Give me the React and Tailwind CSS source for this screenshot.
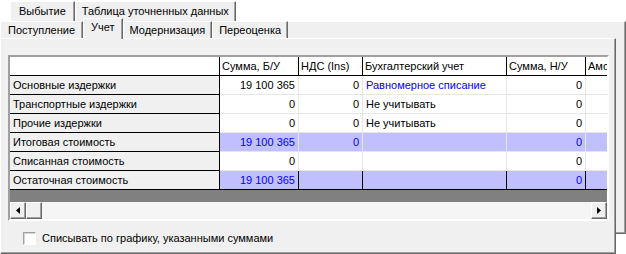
const rows = [
  { label: "Основные издержки", sum: "19 100 365", nds: "0", acc: "Равномерное списание", accBlue: true, nu: "0" },
  { label: "Транспортные издержки", sum: "0", nds: "0", acc: "Не учитывать", nu: "0" },
  { label: "Прочие издержки", sum: "0", nds: "0", acc: "Не учитывать", nu: "0" },
  { label: "Итоговая стоимость", sum: "19 100 365", nds: "0", acc: "", nu: "0", total: true },
  { label: "Списанная стоимость", sum: "0", nds: "", acc: "", nu: "0" },
  { label: "Остаточная стоимость", sum: "19 100 365", nds: "", acc: "", nu: "0", total: true },
];

function Tab({ children, className = "" }) {
  return (
    <div
      className={`flex items-center border-l border-t border-white border-r border-r-[#696969] bg-[#f0f0f0] shadow-[inset_-1px_0_0_#a0a0a0] ${className}`}
    >
      {children}
    </div>
  );
}

function Arrow({ dir }) {
  return (
    <svg width="4" height="7" viewBox="0 0 4 7">
      {dir === "left" ? <path d="M4 0 L0 3.5 L4 7 Z" fill="#000" /> : <path d="M0 0 L4 3.5 L0 7 Z" fill="#000" />}
    </svg>
  );
}

function ScrollButton({ children }) {
  return (
    <div className="flex h-[17px] w-[16px] items-center justify-center border-l border-t border-white border-r border-b border-r-[#696969] border-b-[#696969] bg-[#f0f0f0] shadow-[inset_-1px_-1px_0_#a0a0a0]">
      {children}
    </div>
  );
}

export default function App() {
  return (
    <div className="h-[254px] w-[626px] overflow-hidden bg-white font-['Liberation_Sans',Arial,sans-serif] text-[11px] leading-none text-black">
      {/* first tab row */}
      <div className="flex h-[21px] items-end pl-[10px]">
        <Tab className="h-[20px] px-[8px]">Выбытие</Tab>
        <Tab className="h-[20px] px-[6px]">Таблица уточненных данных</Tab>
      </div>

      {/* back page */}
      <div className="h-[213px] w-[626px] border-t border-white border-r border-b border-r-[#696969] border-b-[#696969] bg-[#f0f0f0] shadow-[inset_-1px_-1px_0_#a0a0a0]">
        {/* second tab row */}
        <div className="flex h-[16px] items-end">
          <Tab className="h-[17px] px-[7px]">Поступление</Tab>
          <Tab className="relative z-10 -mb-px h-[21px] px-[7px] pb-[3px]">Учет</Tab>
          <Tab className="h-[17px] px-[6px]">Модернизация</Tab>
          <Tab className="h-[17px] px-[6px]">Переоценка</Tab>
        </div>

        {/* front page */}
        <div className="h-[216px] w-[616px] border-l border-t border-white border-r border-b border-r-[#696969] border-b-[#696969] bg-[#f0f0f0] pl-[7px] pt-[16px] shadow-[inset_-1px_-1px_0_#a0a0a0]">
          <div className="w-[601px] border-2 border-t-[#a0a0a0] border-l-[#a0a0a0] border-r-white border-b-white">
            <div className="overflow-hidden shadow-[inset_1px_1px_0_#696969]">
              {/* header */}
              <div className="flex h-[19px] border-b border-black bg-white">
                <div className="w-[210px] shrink-0 border-r border-black" />
                <div className="flex w-[79px] shrink-0 items-center border-r border-black px-[2px]">Сумма, Б/У</div>
                <div className="flex w-[64px] shrink-0 items-center border-r border-black px-[2px]">НДС (Ins)</div>
                <div className="flex w-[144px] shrink-0 items-center border-r border-black px-[2px]">Бухгалтерский учет</div>
                <div className="flex w-[79px] shrink-0 items-center border-r border-black px-[2px]">Сумма, Н/У</div>
                <div className="flex w-[60px] shrink-0 items-center px-[2px]">Амортизация</div>
              </div>

              {rows.map((row, i) => {
                const last = i === rows.length - 1;
                const cellBg = row.total ? "bg-[#c0c0ff]" : "bg-white";
                const numColor = row.total ? "text-[#0000ff]" : "text-black";
                const line = last ? "border-b border-black" : "border-b border-[#e6e6e6]";
                return (
                  <div key={row.label} className="flex h-[19px]">
                    <div
                      className={`flex w-[210px] shrink-0 items-center border-r border-b border-black bg-[#f0f0f0] px-[3px]`}
                    >
                      {row.label}
                    </div>
                    <div className={`flex w-[79px] shrink-0 items-center justify-end border-r border-[#e6e6e6] ${line} ${cellBg} ${numColor} px-[3px]`}>
                      {row.sum}
                    </div>
                    <div className={`flex w-[64px] shrink-0 items-center justify-end border-r border-[#e6e6e6] ${line} ${cellBg} ${numColor} px-[3px]`}>
                      {row.nds}
                    </div>
                    <div
                      className={`flex w-[144px] shrink-0 items-center border-r border-[#e6e6e6] ${line} ${cellBg} px-[3px] ${row.accBlue ? "text-[#0000ff]" : "text-black"}`}
                    >
                      {row.acc}
                    </div>
                    <div className={`flex w-[79px] shrink-0 items-center justify-end border-r border-[#e6e6e6] ${line} ${cellBg} ${numColor} px-[3px]`}>
                      {row.nu}
                    </div>
                    <div className={`w-[60px] shrink-0 ${line} ${cellBg}`} />
                  </div>
                );
              })}

              {/* empty grid area */}
              <div className="h-[12px] bg-[#808080]" />

              {/* horizontal scrollbar */}
              <div className="flex h-[17px] bg-[#f5f5f5]">
                <ScrollButton>
                  <Arrow dir="left" />
                </ScrollButton>
                <ScrollButton />
                <div className="flex-1" />
                <ScrollButton>
                  <Arrow dir="right" />
                </ScrollButton>
              </div>
            </div>
          </div>

          {/* checkbox */}
          <div className="mt-[11px] flex items-center pl-[15px]">
            <div className="h-[13px] w-[13px] border border-t-[#a0a0a0] border-l-[#a0a0a0] border-r-white border-b-white bg-white shadow-[inset_1px_1px_0_#d4d4d4]" />
            <span className="ml-[6px]">Списывать по графику, указанными суммами</span>
          </div>
        </div>
      </div>
    </div>
  );
}
